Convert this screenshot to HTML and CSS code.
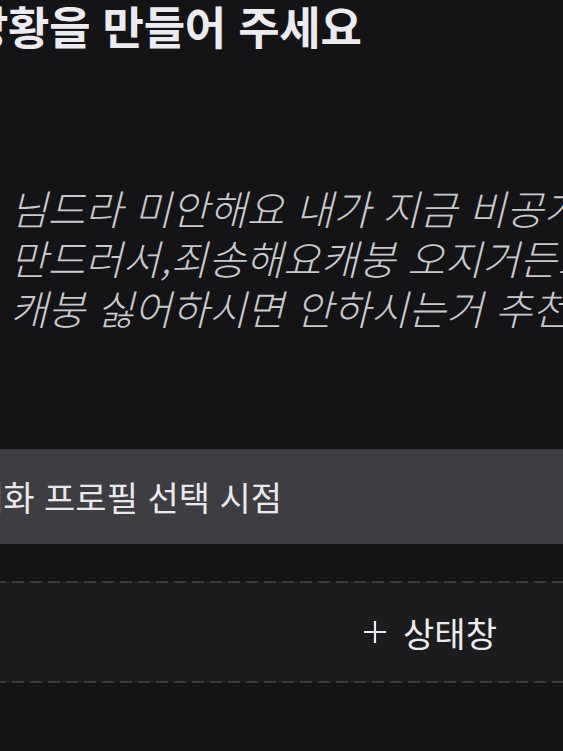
FILE: index.html
```html
<!DOCTYPE html>
<html lang="ko">
<head>
  <meta charset="UTF-8">
  <meta name="viewport" content="width=device-width, initial-scale=1.0">
  <title>상황 만들기</title>
  <link rel="stylesheet" href="styles.css">
</head>
<body>
  <div class="screen">
    <div class="page">
      <h1 class="title">상황을 만들어 주세요</h1>

      <p class="note">
        님드라 미안해요 내가 지금 비공개로<br>
        만드러서,죄송해요캐붕 오지거든요<br>
        캐붕 싫어하시면 안하시는거 추천해요
      </p>

      <div class="select-bar">대화 프로필 선택 시점</div>

      <button class="add-box">
        <svg class="plus-icon" viewBox="0 0 24 24" width="24" height="24">
          <path d="M12 1v22M1 12h22" stroke="currentColor" stroke-width="2.2" fill="none"/>
        </svg>
        <span>상태창</span>
      </button>
    </div>
  </div>
</body>
</html>
```

FILE: styles.css
```css
body {
  margin: 0;
  padding: 0;
  background-color: #141417;
  font-family: 'Noto Sans CJK KR', 'Noto Sans', sans-serif;
}

.screen {
  width: 563px;
  height: 751px;
  overflow: hidden;
}

.page {
  width: 980px;
  margin-left: -60px;
  display: flex;
  flex-direction: column;
}

.title {
  margin: 0;
  padding-left: 27px;
  font-size: 45px;
  line-height: 51px;
  font-weight: 700;
  color: #ececf0;
  letter-spacing: -0.3px;
  white-space: nowrap;
}

.note {
  margin: 132px 0 0 0;
  padding-left: 70px;
  font-size: 40.8px;
  line-height: 50px;
  font-weight: 300;
  font-style: italic;
  color: #c9c9cd;
  white-space: nowrap;
}

.select-bar {
  margin-top: 116px;
  height: 95px;
  display: flex;
  align-items: center;
  padding-left: 32px;
  background-color: #3e3d42;
  color: #e9e9ec;
  font-size: 34px;
  white-space: nowrap;
}

.add-box {
  margin-top: 37px;
  height: 102px;
  display: flex;
  align-items: center;
  justify-content: center;
  gap: 16px;
  border: none;
  padding: 0;
  color: #ececf0;
  font-family: inherit;
  font-size: 34px;
  background:
    repeating-linear-gradient(90deg, #3b3b3e 0 12px, transparent 12px 18px) top / 100% 2px no-repeat,
    repeating-linear-gradient(90deg, #3b3b3e 0 12px, transparent 12px 18px) bottom / 100% 2px no-repeat,
    #1c1c1e;
}

.plus-icon {
  display: block;
}
```
